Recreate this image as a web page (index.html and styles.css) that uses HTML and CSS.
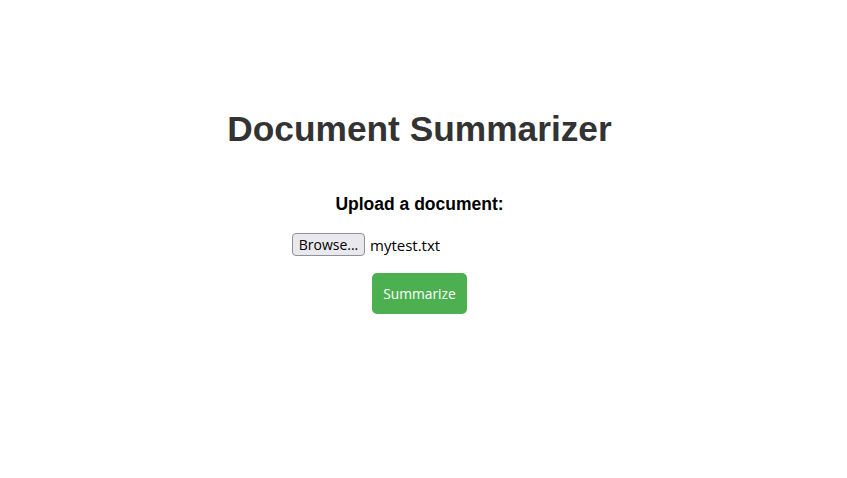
FILE: index.html
```html
<!DOCTYPE html>
<html>
<head>
<meta charset="utf-8">
<link rel="stylesheet" href="styles.css">
</head>
<body>
<main class="page">
  <h1 class="title">Document Summarizer</h1>
  <form class="form">
    <label class="label">Upload a document:</label>
    <div class="file">
      <span class="browse">Browse...</span>
      <span class="filename">mytest.txt</span>
    </div>
    <button type="button" class="submit">Summarize</button>
  </form>
</main>
</body>
</html>
```

FILE: styles.css
```css
html, body {
  margin: 0;
  padding: 0;
  background: #fff;
}
.page {
  width: 839px;
  display: flex;
  flex-direction: column;
  align-items: center;
  padding-top: 108px;
  font-family: "Liberation Sans", Arial, sans-serif;
}
.title {
  margin: 0;
  font-size: 35.3px;
  font-weight: bold;
  color: #333;
  line-height: 42px;
}
.form {
  display: flex;
  flex-direction: column;
  align-items: center;
  margin-top: 43px;
}
.label {
  font-size: 17.5px;
  font-weight: bold;
  color: #000;
  line-height: 22px;
}
.file {
  display: flex;
  align-items: center;
  width: 255px;
  margin-top: 18px;
  gap: 5px;
}
.browse {
  box-sizing: border-box;
  height: 23px;
  width: 73px;
  display: flex;
  align-items: center;
  justify-content: center;
  border: 1px solid #8f8f9d;
  border-radius: 4px;
  background: #e9e9ed;
  font-family: "Open Sans", sans-serif;
  font-size: 14px;
  color: #000;
}
.filename {
  font-family: "Open Sans", sans-serif;
  font-size: 15px;
  color: #000;
}
.submit {
  margin-top: 17px;
  width: 95px;
  height: 41px;
  border: none;
  border-radius: 5px;
  background: #4caf50;
  color: #fff;
  font-family: "Open Sans", sans-serif;
  font-size: 13.8px;
  padding: 0;
}
```
